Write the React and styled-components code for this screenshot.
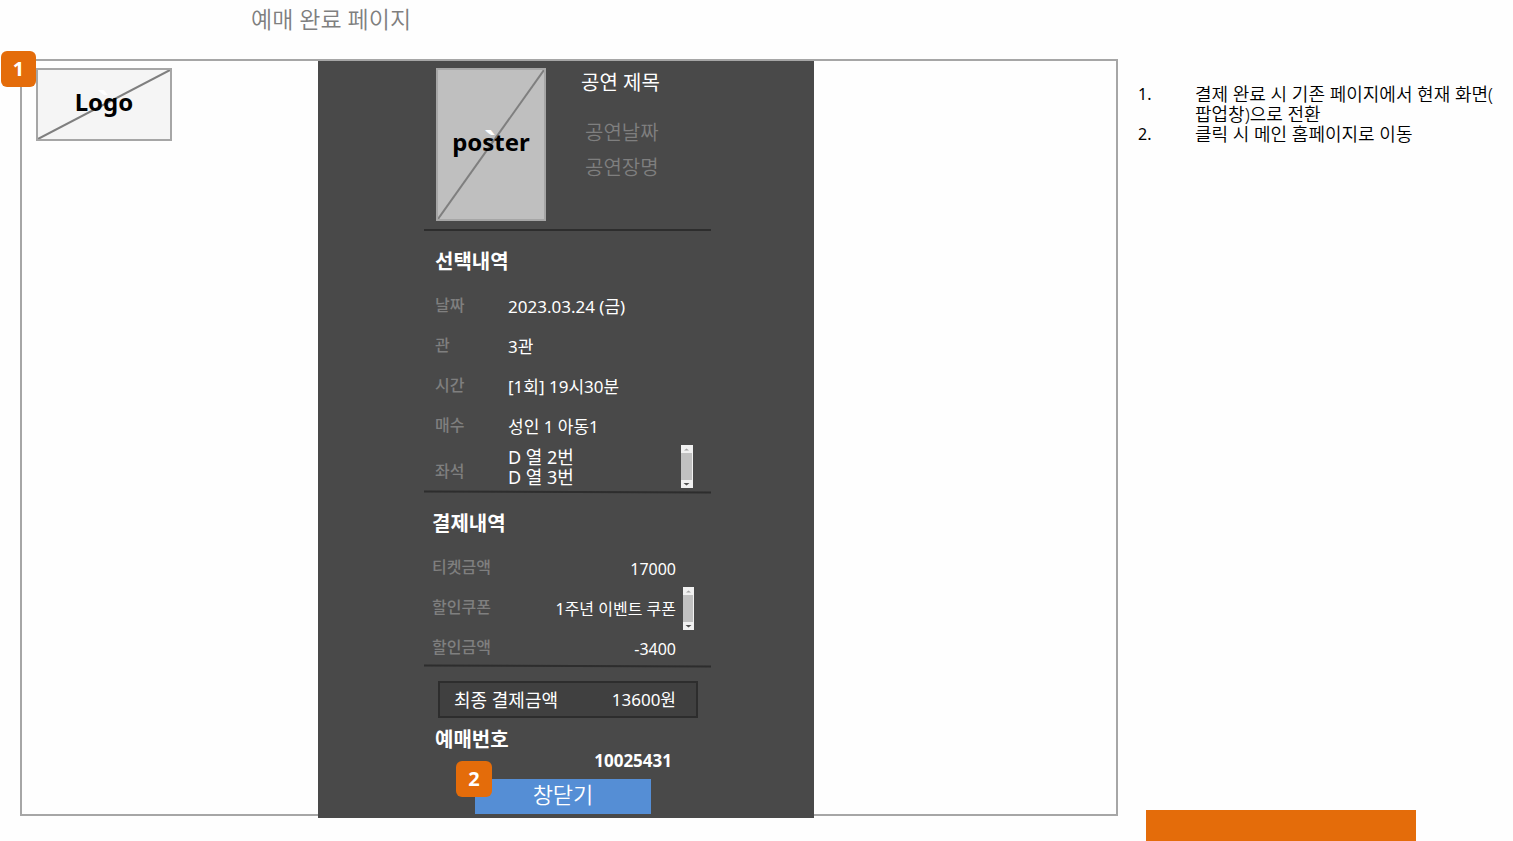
import React from 'react';
import styled, { createGlobalStyle } from 'styled-components';

const GlobalStyle = createGlobalStyle`
  * { box-sizing: border-box; }
  body {
    margin: 0;
    background: #fefefe;
    color: #000;
    font-family: "Noto Sans", "Noto Sans CJK KR", sans-serif;
    font-size: 16px;
    line-height: 20px;
  }
  h1, h2, h3, p, dl, dd, dt, ol, ul, figure { margin: 0; padding: 0; }
`;

const Page = styled.div`
  display: grid;
  grid-template-columns: minmax(520px, 1098fr) minmax(260px, 395fr);
  min-height: 100vh;
  padding-left: 20px;
`;

const Board = styled.main`
  display: flex;
  flex-direction: column;
  padding-bottom: 25px;
`;

const PageTitle = styled.h1`
  height: 59px;
  padding: 5px 0 0 231px;
  color: #7f7f7f;
  font-size: 23px;
  font-weight: 350;
  line-height: 28px;
`;

const Frame = styled.div`
  position: relative;
  flex: 1;
  display: grid;
  grid-template-columns: minmax(0, 296fr) 496px minmax(0, 302fr);
  border: 2px solid #a6a6a6;
`;

const Badge = styled.span`
  position: absolute;
  top: ${(p) => p.$top};
  left: ${(p) => p.$left};
  z-index: 1;
  display: grid;
  place-items: center;
  width: ${(p) => p.$w || '36px'};
  height: 36px;
  border-radius: 6px;
  background: #e46c0a;
  color: #fff;
  font-size: 20px;
  font-weight: 700;
`;

const Placeholder = styled.figure`
  position: relative;
  flex: none;
  display: grid;
  place-items: center;
  width: ${(p) => p.$w};
  height: ${(p) => p.$h};
  padding-bottom: 6px;
  border: 2px solid #a6a6a6;
  background: ${(p) => p.$fill};
  color: #000;
`;

const Diagonal = styled.svg`
  position: absolute;
  inset: 0;
  width: 100%;
  height: 100%;
`;

const Tick = styled.span`
  position: absolute;
  top: calc(50% - 18px);
  left: calc(50% - 7px);
  color: #fff;
  font-size: 32px;
  font-weight: 700;
  line-height: 32px;
`;

const PlaceholderName = styled.figcaption`
  position: relative;
  font-size: 24px;
  font-weight: 700;
  line-height: 28px;
`;

const LogoArea = styled.div`
  padding: 7px 0 0 14px;
`;

const Panel = styled.section`
  margin-bottom: -4px;
  padding: 7px 103px 4px 106px;
  background: #494949;
  color: #fff;
  z-index: 0;
`;

const Show = styled.div`
  display: flex;
  gap: 35px;
  padding: 0 0 8px 12px;
`;

const ShowInfo = styled.div`
  display: flex;
  flex-direction: column;
  padding-top: 3px;
  font-size: 20px;
  line-height: 24px;
`;

const ShowTitle = styled.h2`
  margin-bottom: 26px;
  font-size: 20px;
  font-weight: 400;
`;

const ShowMeta = styled.p`
  padding-left: 4px;
  margin-bottom: 11px;
  color: #7f7f7f;
  font-weight: 350;
`;

const Divider = styled.hr`
  height: 2px;
  margin: 0;
  border: 0;
  background: #2d2d2d;
  transform: rotate(${(p) => (p.$tilted ? '0.2deg' : '0deg')});
`;

const Details = styled.section`
  padding: 19px 0 ${(p) => p.$bottom} ${(p) => p.$inset};
`;

const Heading = styled.h3`
  font-size: 20px;
  font-weight: 700;
  line-height: 24px;
`;

const Rows = styled.dl`
  display: flex;
  flex-direction: column;
  gap: 20px;
  padding-top: 23px;
`;

const Row = styled.div`
  display: flex;
  align-items: center;
  height: 20px;
`;

const SeatRow = styled(Row)`
  height: 40px;
  margin-top: -10px;
`;

const Label = styled.dt`
  flex: none;
  width: 73px;
  color: #7f7f7f;
  font-size: 16px;
  font-weight: 500;
  padding-bottom: 4px;
  ${SeatRow} & { padding: 8px 0 0; }
`;

const Value = styled.dd`
  flex: 1;
  font-size: ${(p) => (p.$end ? '16px' : '17px')};
  white-space: nowrap;
  text-align: ${(p) => (p.$end ? 'right' : 'left')};
`;

const SeatList = styled.ul`
  list-style: none;
  font-size: 18px;
  line-height: 20px;
`;

const Side = styled.span`
  flex: none;
  display: flex;
  align-items: center;
  width: 35px;
  padding: 0 0 2px ${(p) => p.$pad};
`;

const TotalBox = styled.dl`
  display: flex;
  align-items: center;
  justify-content: space-between;
  height: 37px;
  margin: 14px 13px 0 14px;
  padding: 0 20px 0 14px;
  border: 2px solid #2d2d2d;
  background: #404040;
  font-size: 17px;
`;

const TotalLabel = styled.dt`
  font-size: 18px;
`;

const Booking = styled.div`
  padding: 10px 39px 10px 11px;
`;

const BookingNumber = styled.p`
  font-size: 17px;
  font-weight: 700;
  text-align: right;
  line-height: 17px;
`;

const CloseArea = styled.div`
  position: relative;
  padding-left: 51px;
`;

const CloseButton = styled.button`
  display: block;
  width: 176px;
  height: 35px;
  padding: 0 0 4px;
  border: 0;
  background: #558ed5;
  color: #fff;
  font: 350 22px/31px "Noto Sans", "Noto Sans CJK KR", sans-serif;
  cursor: pointer;
`;

const Notes = styled.aside`
  display: flex;
  flex-direction: column;
  justify-content: space-between;
  padding: 84px 8px 0 20px;
`;

const NoteList = styled.ol`
  list-style: none;
  font-size: 18px;
  font-weight: 350;
  line-height: 20px;
`;

const Note = styled.li`
  display: grid;
  grid-template-columns: 57px 1fr;
`;

const NoteNumber = styled.span`
  font-size: 16px;
  font-weight: 400;
`;

const FooterBar = styled.div`
  width: 270px;
  max-width: 100%;
  height: 31px;
  margin-left: 8px;
  background: #e46c0a;
`;

function Wireframe({ name, w, h, fill }) {
  return (
    <Placeholder $w={w} $h={h} $fill={fill}>
      <Diagonal viewBox="0 0 100 100" preserveAspectRatio="none" aria-hidden="true">
        <line x1="0" y1="100" x2="100" y2="0" stroke="#7f7f7f" strokeWidth="2" vectorEffect="non-scaling-stroke" />
      </Diagonal>
      <Tick aria-hidden="true">`</Tick>
      <PlaceholderName>{name}</PlaceholderName>
    </Placeholder>
  );
}

function ScrollGlyph({ width }) {
  return (
    <svg width={width} height="43" viewBox={`0 0 ${width} 43`} aria-hidden="true">
      <rect width="12" height="43" fill="#f1f1f1" />
      <rect y="8" width={width - 1} height="27" fill="#c1c1c1" />
      <path d="M3 5.5 L5.5 3.5 L8 5.5Z" fill="#a3a3a3" />
      <path d="M2.5 38 H8.5 L5.5 40.5Z" fill="#505050" />
    </svg>
  );
}

const selection = [
  ['날짜', '2023.03.24 (금)'],
  ['관', '3관'],
  ['시간', '[1회] 19시30분'],
  ['매수', '성인 1 아동1'],
];

const payment = [
  { label: '티켓금액', value: '17000' },
  { label: '할인쿠폰', value: '1주년 이벤트 쿠폰', scroll: true },
  { label: '할인금액', value: '-3400' },
];

export default function App() {
  return (
    <>
      <GlobalStyle />
      <Page>
        <Board>
          <PageTitle>예매 완료 페이지</PageTitle>
          <Frame>
            <Badge $top="-10px" $left="-21px" $w="35px">1</Badge>
            <LogoArea>
              <Wireframe name="Logo" w="136px" h="73px" fill="#f5f5f5" />
            </LogoArea>
            <Panel>
              <Show>
                <Wireframe name="poster" w="110px" h="153px" fill="#bfbfbf" />
                <ShowInfo>
                  <ShowTitle>공연 제목</ShowTitle>
                  <ShowMeta>공연날짜</ShowMeta>
                  <ShowMeta>공연장명</ShowMeta>
                </ShowInfo>
              </Show>
              <Divider />
              <Details $inset="11px" $bottom="4px">
                <Heading>선택내역</Heading>
                <Rows>
                  {selection.map(([label, value]) => (
                    <Row key={label}>
                      <Label>{label}</Label>
                      <Value>{value}</Value>
                    </Row>
                  ))}
                  <SeatRow>
                    <Label>좌석</Label>
                    <Value>
                      <SeatList>
                        <li>D 열 2번</li>
                        <li>D 열 3번</li>
                      </SeatList>
                    </Value>
                    <Side $pad="5px"><ScrollGlyph width={12} /></Side>
                  </SeatRow>
                </Rows>
              </Details>
              <Divider $tilted />
              <Details $inset="8px" $bottom="6px">
                <Heading>결제내역</Heading>
                <Rows>
                  {payment.map(({ label, value, scroll }) => (
                    <Row key={label}>
                      <Label>{label}</Label>
                      <Value $end>{value}</Value>
                      <Side $pad="7px">{scroll && <ScrollGlyph width={11} />}</Side>
                    </Row>
                  ))}
                </Rows>
              </Details>
              <Divider $tilted />
              <TotalBox>
                <TotalLabel>최종 결제금액</TotalLabel>
                <dd>13600원</dd>
              </TotalBox>
              <Booking>
                <Heading>예매번호</Heading>
                <BookingNumber>10025431</BookingNumber>
              </Booking>
              <CloseArea>
                <Badge $top="-18px" $left="32px">2</Badge>
                <CloseButton type="button">창닫기</CloseButton>
              </CloseArea>
            </Panel>
          </Frame>
        </Board>
        <Notes>
          <NoteList>
            <Note>
              <NoteNumber>1.</NoteNumber>
              <span>결제 완료 시 기존 페이지에서 현재 화면(<br />팝업창)으로 전환</span>
            </Note>
            <Note>
              <NoteNumber>2.</NoteNumber>
              <span>클릭 시 메인 홈페이지로 이동</span>
            </Note>
          </NoteList>
          <FooterBar />
        </Notes>
      </Page>
    </>
  );
}
